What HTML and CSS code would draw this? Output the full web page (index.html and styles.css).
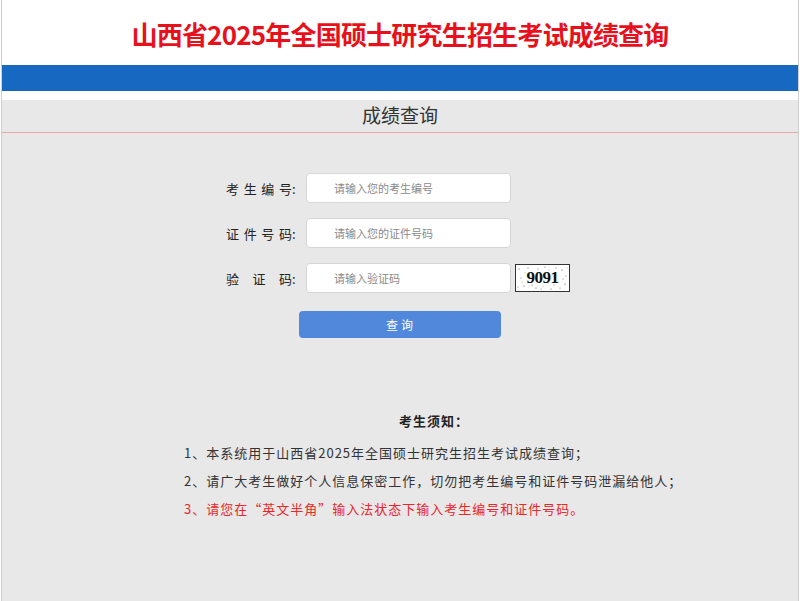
FILE: index.html
```html
<!DOCTYPE html>
<html lang="zh-CN">
<head>
<meta charset="utf-8">
<title>成绩查询</title>
<link rel="stylesheet" href="styles.css">
</head>
<body>
<div class="page">
  <header class="header">
    <h1 class="site-title">山西省2025年全国硕士研究生招生考试成绩查询</h1>
  </header>
  <div class="band"></div>
  <div class="gap"></div>
  <main class="main">
    <div class="section-title">成绩查询</div>
    <form class="form">
      <div class="row">
        <label class="label"><span class="label-text">考生编号</span>:</label>
        <input class="input" type="text" placeholder="请输入您的考生编号">
        <span class="spacer"></span>
      </div>
      <div class="row">
        <label class="label"><span class="label-text">证件号码</span>:</label>
        <input class="input" type="text" placeholder="请输入您的证件号码">
        <span class="spacer"></span>
      </div>
      <div class="row">
        <label class="label"><span class="label-text">验证码</span>:</label>
        <input class="input" type="text" placeholder="请输入验证码">
        <span class="captcha">
          <svg class="noise" width="53" height="26" viewBox="0 0 53 26">
            <g fill="#555">
              <circle cx="3" cy="4" r="0.6"/><circle cx="8" cy="21" r="0.6"/><circle cx="12" cy="3" r="0.5"/>
              <circle cx="46" cy="5" r="0.6"/><circle cx="49" cy="19" r="0.6"/><circle cx="44" cy="23" r="0.5"/>
              <circle cx="20" cy="23" r="0.6"/><circle cx="29" cy="2" r="0.5"/><circle cx="35" cy="24" r="0.6"/>
              <circle cx="5" cy="13" r="0.5"/><circle cx="50" cy="11" r="0.5"/><circle cx="25" cy="24" r="0.5"/>
              <circle cx="40" cy="3" r="0.5"/><circle cx="16" cy="20" r="0.5"/><circle cx="2" cy="22" r="0.5"/>
              <circle cx="38" cy="20" r="0.5"/><circle cx="22" cy="4" r="0.5"/><circle cx="47" cy="14" r="0.5"/>
              <circle cx="9" cy="8" r="0.4"/><circle cx="33" cy="5" r="0.4"/><circle cx="42" cy="17" r="0.4"/>
              <circle cx="27" cy="21" r="0.4"/><circle cx="6" cy="17" r="0.4"/><circle cx="51" cy="3" r="0.4"/>
            </g>
          </svg>
          <span class="captcha-text">9091</span>
        </span>
      </div>
      <div class="btn-row">
        <button class="btn" type="button">查询</button>
      </div>
    </form>
    <section class="notice">
      <h2 class="notice-title">考生须知：</h2>
      <p class="notice-line">1、本系统用于山西省2025年全国硕士研究生招生考试成绩查询；</p>
      <p class="notice-line">2、请广大考生做好个人信息保密工作，切勿把考生编号和证件号码泄漏给他人；</p>
      <p class="notice-line red">3、请您在“英文半角”输入法状态下输入考生编号和证件号码。</p>
    </section>
  </main>
</div>
</body>
</html>
```

FILE: styles.css
```css
html, body {
  margin: 0;
  padding: 0;
  height: 100%;
}
body {
  font-family: "Noto Sans CJK SC", "Noto Sans", sans-serif;
  background: #ffffff;
  color: #333;
}
.page {
  margin: 0 1px;
  border-left: 1px solid #cfcfcf;
  border-right: 1px solid #cfcfcf;
  min-height: 601px;
  display: flex;
  flex-direction: column;
  box-sizing: border-box;
}
.header {
  height: 65px;
  display: flex;
  align-items: center;
  justify-content: center;
}
.site-title {
  margin: 0;
  padding-top: 1px;
  font-size: 26px;
  font-weight: 700;
  color: #e8101a;
  letter-spacing: -0.8px;
}
.band {
  height: 26px;
  background: #1668c1;
}
.gap {
  height: 9px;
}
.main {
  flex: 1;
  background: #e8e8e8;
}
.section-title {
  height: 32px;
  line-height: 30px;
  text-align: center;
  font-size: 19px;
  color: #333;
  border-bottom: 1px solid #f1a6a6;
}
.form {
  padding-top: 40px;
  display: flex;
  flex-direction: column;
  align-items: center;
  gap: 15px;
}
.row {
  display: flex;
  align-items: center;
  height: 30px;
  width: 344px;
  padding-right: 4px;
}
.label {
  display: flex;
  align-items: center;
  width: 70px;
  font-size: 13px;
  color: #222;
  margin-right: 10px;
}
.label-text {
  width: 66px;
  text-align: justify;
  text-align-last: justify;
}
.input {
  box-sizing: border-box;
  width: 205px;
  height: 30px;
  border: 1px solid #d6d6d6;
  border-radius: 4px;
  background: #fff;
  padding: 0 0 0 27px;
  font-family: "Noto Sans CJK SC", sans-serif;
  font-size: 11px;
  color: #333;
  outline: none;
}
.input::placeholder {
  color: #8a8a8a;
}
.spacer {
  width: 55px;
  margin-left: 4px;
}
.captcha {
  position: relative;
  box-sizing: border-box;
  width: 55px;
  height: 28px;
  margin-left: 4px;
  border: 1px solid #333;
  background: #fff;
  display: flex;
  align-items: center;
  justify-content: center;
}
.noise {
  position: absolute;
  left: 0;
  top: 0;
}
.captcha-text {
  position: relative;
  font-family: "Liberation Serif", serif;
  font-weight: 700;
  font-size: 17px;
  color: #111;
  letter-spacing: -0.5px;
}
.btn-row {
  display: flex;
  justify-content: center;
  margin-top: 3px;
  padding-right: 1px;
}
.btn {
  width: 202px;
  height: 27px;
  border: none;
  border-radius: 4px;
  background: #5188dc;
  color: #fff;
  font-family: "Noto Sans CJK SC", sans-serif;
  font-size: 12px;
  letter-spacing: 3px;
  padding: 0 0 0 3px;
}
.notice {
  width: 500px;
  margin: 73px 0 0 182px;
}
.notice-title {
  margin: 0 0 9px 0;
  text-align: center;
  font-size: 13px;
  font-weight: 700;
  color: #222;
  letter-spacing: 1px;
}
.notice-line {
  margin: 0;
  font-size: 13px;
  line-height: 28px;
  letter-spacing: 1px;
  color: #333;
  white-space: nowrap;
}
.notice-line.red {
  color: #e8262b;
}
```
